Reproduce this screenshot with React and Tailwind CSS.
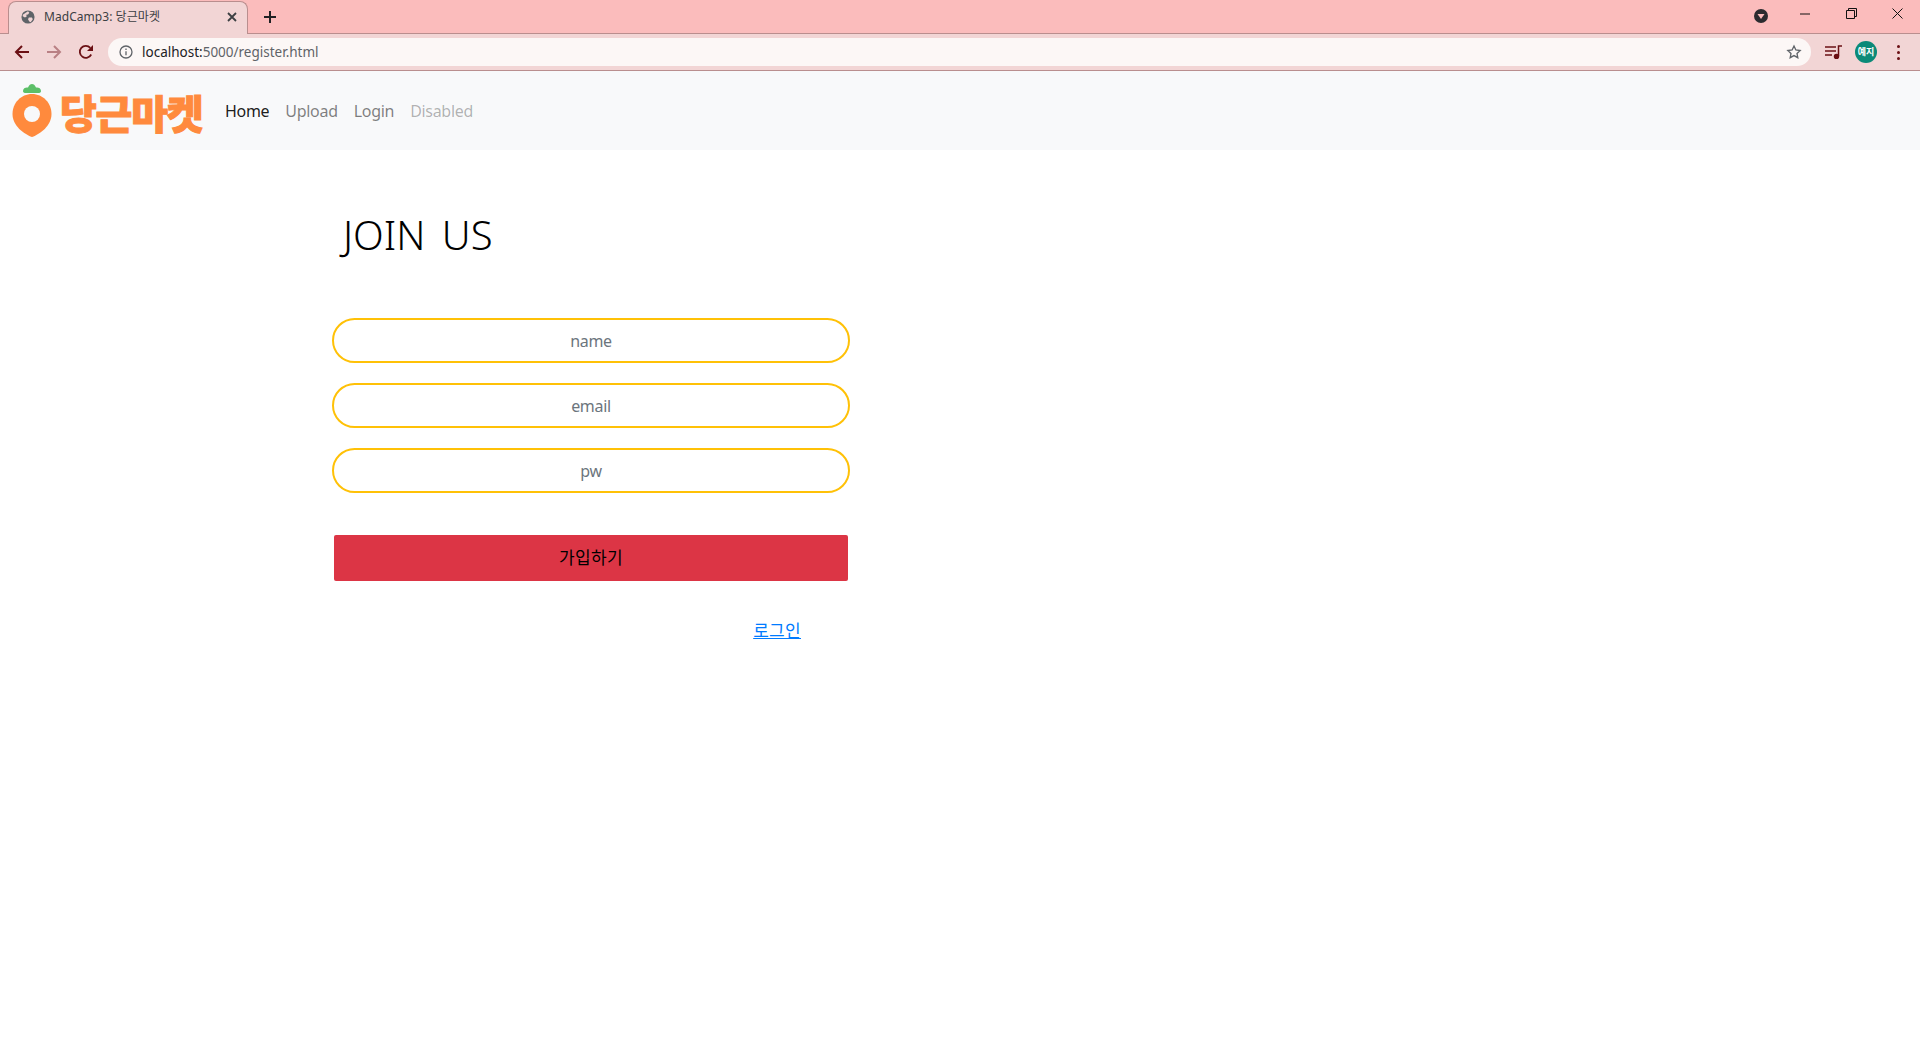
import React from "react";

const sans = "font-['Noto_Sans','Noto_Sans_CJK_KR',sans-serif]";

function Globe() {
  return (
    <svg width="14" height="14" viewBox="0 0 16 16">
      <circle cx="8" cy="8" r="7.5" fill="#5f6368" />
      <path d="M2 5.5 5 3.5 8 1.5 9.5 3 8 5 6 5.5 6.5 7.5 4.5 8.5 2 7ZM9 8.5h3.5l1 2-2.5 3.5-1.5-1L8 10.500Z" fill="#f2d5d5" />
    </svg>
  );
}

function Back({ color }) {
  return (
    <svg width="16" height="16" viewBox="0 0 16 16" fill="none" stroke={color} strokeWidth="2">
      <path d="M15 8H2M8 2 2 8l6 6" />
    </svg>
  );
}

function Forward({ color }) {
  return (
    <svg width="16" height="16" viewBox="0 0 16 16" fill="none" stroke={color} strokeWidth="2">
      <path d="M1 8h13M8 2l6 6-6 6" />
    </svg>
  );
}

function Reload() {
  return (
    <svg width="16" height="16" viewBox="0 0 16 16" fill="none">
      <path d="M13.2 10.500A6 6 0 1 1 12.300 3.800" stroke="#6b1014" strokeWidth="1.800" />
      <path d="M15 1v6H9Z" fill="#6b1014" />
    </svg>
  );
}

function Logo() {
  return (
    <div className="flex items-center w-[200px] h-[64px] shrink-0">
      <svg width="40" height="54" viewBox="0 0 40 54" className="shrink-0">
        <path d="M11 7c0-3 3-4 5-3.500C17 1 18.500 0 20 0s3 1 4 3.500c2-.5 5 .5 5 3.500 0 1.500-1 2-3 2H14c-2 0-3-.5-3-2Z" fill="#5cbf68" />
        <path d="M20 10C31 10 39.500 19 39.500 30 39.500 42 28 50 20 53 12 50 .5 42 .5 30 .5 19 9 10 20 10Z" fill="#ff8a3d" />
        <circle cx="20" cy="30" r="8" fill="#f8f9fa" />
      </svg>
      <span className="ml-[8px] mt-[3px] text-[40px] leading-none font-black tracking-[-1.200px] text-[#ff8a3d] font-['Noto_Sans_CJK_KR',sans-serif] [-webkit-text-stroke:1px_#ff8a3d] [stroke-linejoin:round]">
        당근마켓
      </span>
    </div>
  );
}

function Field({ placeholder }) {
  return (
    <input
      placeholder={placeholder}
      className={`${sans} block w-full h-[45px] rounded-[23px] border-2 border-[#ffc107] bg-white text-center text-base tracking-[-0.300px] text-[#495057] placeholder:text-[#6c757d] outline-none`}
    />
  );
}

export default function App() {
  return (
    <div className={`${sans} min-h-[1040px] w-full bg-white flex flex-col`}>
      <div className="h-[34px] bg-[#fbbcbc] border-b border-[#b98e8e] flex items-end pl-2 relative">
        <div className="w-[240px] h-[33px] mb-[-1px] bg-[#f2d5d5] rounded-t-lg border border-b-0 border-[#b98e8e] flex items-center pl-[12px] pr-[10px] pb-[2px] text-xs text-[#3c4043]">
          <Globe />
          <span className="ml-[9px] flex-1 tracking-[0.050px]">MadCamp3: 당근마켓</span>
          <svg width="10" height="10" viewBox="0 0 10 10" stroke="#3c4043" strokeWidth="1.800">
            <path d="M1 1l8 8M9 1 1 9" />
          </svg>
        </div>
        <svg width="14" height="14" viewBox="0 0 14 14" stroke="#202124" strokeWidth="2" className="ml-[15px] mb-[9px]">
          <path d="M7 1v12M1 7h12" />
        </svg>
        <div className="ml-auto flex items-center h-full mr-[17px] pb-[1px]">
          <svg width="14" height="14" viewBox="0 0 14 14">
            <circle cx="7" cy="7" r="7" fill="#2b2b2f" />
            <path d="M3.500 5h7L7 10Z" fill="#fbbcbc" />
          </svg>
          <svg width="10" height="2" viewBox="0 0 10 2" className="ml-[32px] mb-[5px]">
            <path d="M0 1h10" stroke="#111" strokeWidth="1" />
          </svg>
          <svg width="11" height="11" viewBox="0 0 11 11" fill="none" stroke="#111" className="ml-[36px] mb-[5px]">
            <path d="M.5 2.500h8v8h-8ZM2.500 2.500v-2h8v8h-2" />
          </svg>
          <svg width="11" height="11" viewBox="0 0 11 11" stroke="#111" className="ml-[35px] mb-[5px]">
            <path d="M.5.500l10 10M10.500.500l-10 10" />
          </svg>
        </div>
      </div>
      <div className="h-[37px] bg-[#f2d5d5] border-b border-[#b98e8e] flex items-center pl-[14px] pr-[8px]">
        <Back color="#6b1014" />
        <div className="ml-[16px]"><Forward color="#b98084" /></div>
        <div className="ml-[16px]"><Reload /></div>
        <div className="ml-[14px] flex-1 h-[28px] rounded-full bg-[#fcf7f6] flex items-center pl-[11px] pr-[9px]">
          <svg width="14" height="14" viewBox="0 0 14 14" fill="none" stroke="#5f6368" strokeWidth="1.300">
            <circle cx="7" cy="7" r="6" />
            <path d="M7 6.200v4M7 3.500v1.500" />
          </svg>
          <span className="ml-[9px] text-[13.500px] text-[#202124]">
            localhost:<span className="text-[#5f6368]">5000/register.html</span>
          </span>
          <svg width="16" height="16" viewBox="0 0 24 24" fill="none" stroke="#5f6368" strokeWidth="2" className="ml-auto">
            <path d="m12 3 2.800 5.900 6.400.800-4.700 4.400 1.200 6.400L12 17.400l-5.700 3.100 1.200-6.400-4.700-4.400 6.400-.800Z" />
          </svg>
        </div>
        <svg width="18" height="14" viewBox="0 0 18 14" fill="none" stroke="#6b1014" strokeWidth="1.500" className="ml-[14px]">
          <path d="M0 2h11M0 6h11M0 10h7M13.500 11V1H17" />
          <circle cx="11.500" cy="11.500" r="2" fill="#6b1014" />
        </svg>
        <div className="ml-[12px] w-[22px] h-[22px] rounded-full bg-[#0b8a78] text-white text-[9px] font-bold flex items-center justify-center">
          예지
        </div>
        <div className="ml-[20px] mr-[12px] flex flex-col gap-[3px]">
          <span className="w-[3px] h-[3px] rounded-full bg-[#6b1014]" />
          <span className="w-[3px] h-[3px] rounded-full bg-[#6b1014]" />
          <span className="w-[3px] h-[3px] rounded-full bg-[#6b1014]" />
        </div>
      </div>
      <nav className="h-[79px] bg-[#f8f9fa] flex items-center pl-3">
        <Logo />
        <div className="ml-[13px] flex gap-4 text-base tracking-[-0.300px]">
          <a className="text-black/90">Home</a>
          <a className="text-black/50">Upload</a>
          <a className="text-black/50">Login</a>
          <a className="text-black/30">Disabled</a>
        </div>
      </nav>
      <main className="w-[518px] ml-[332px] flex flex-col">
        <h1 className="mt-[61px] ml-[11px] text-[40px] leading-[48px] font-light text-black [word-spacing:6px]">JOIN US</h1>
        <div className="mt-[59px] flex flex-col gap-[20px]">
          <Field placeholder="name" />
          <Field placeholder="email" />
          <Field placeholder="pw" />
        </div>
        <button className="mt-[42px] mx-[2px] h-[46px] rounded-[2px] bg-[#dc3545] text-black text-[17px] tracking-[0.300px]">가입하기</button>
        <a className="mt-[38px] self-end mr-[49px] text-[17px] tracking-[0.300px] leading-6 text-[#007bff] underline">로그인</a>
      </main>
    </div>
  );
}
